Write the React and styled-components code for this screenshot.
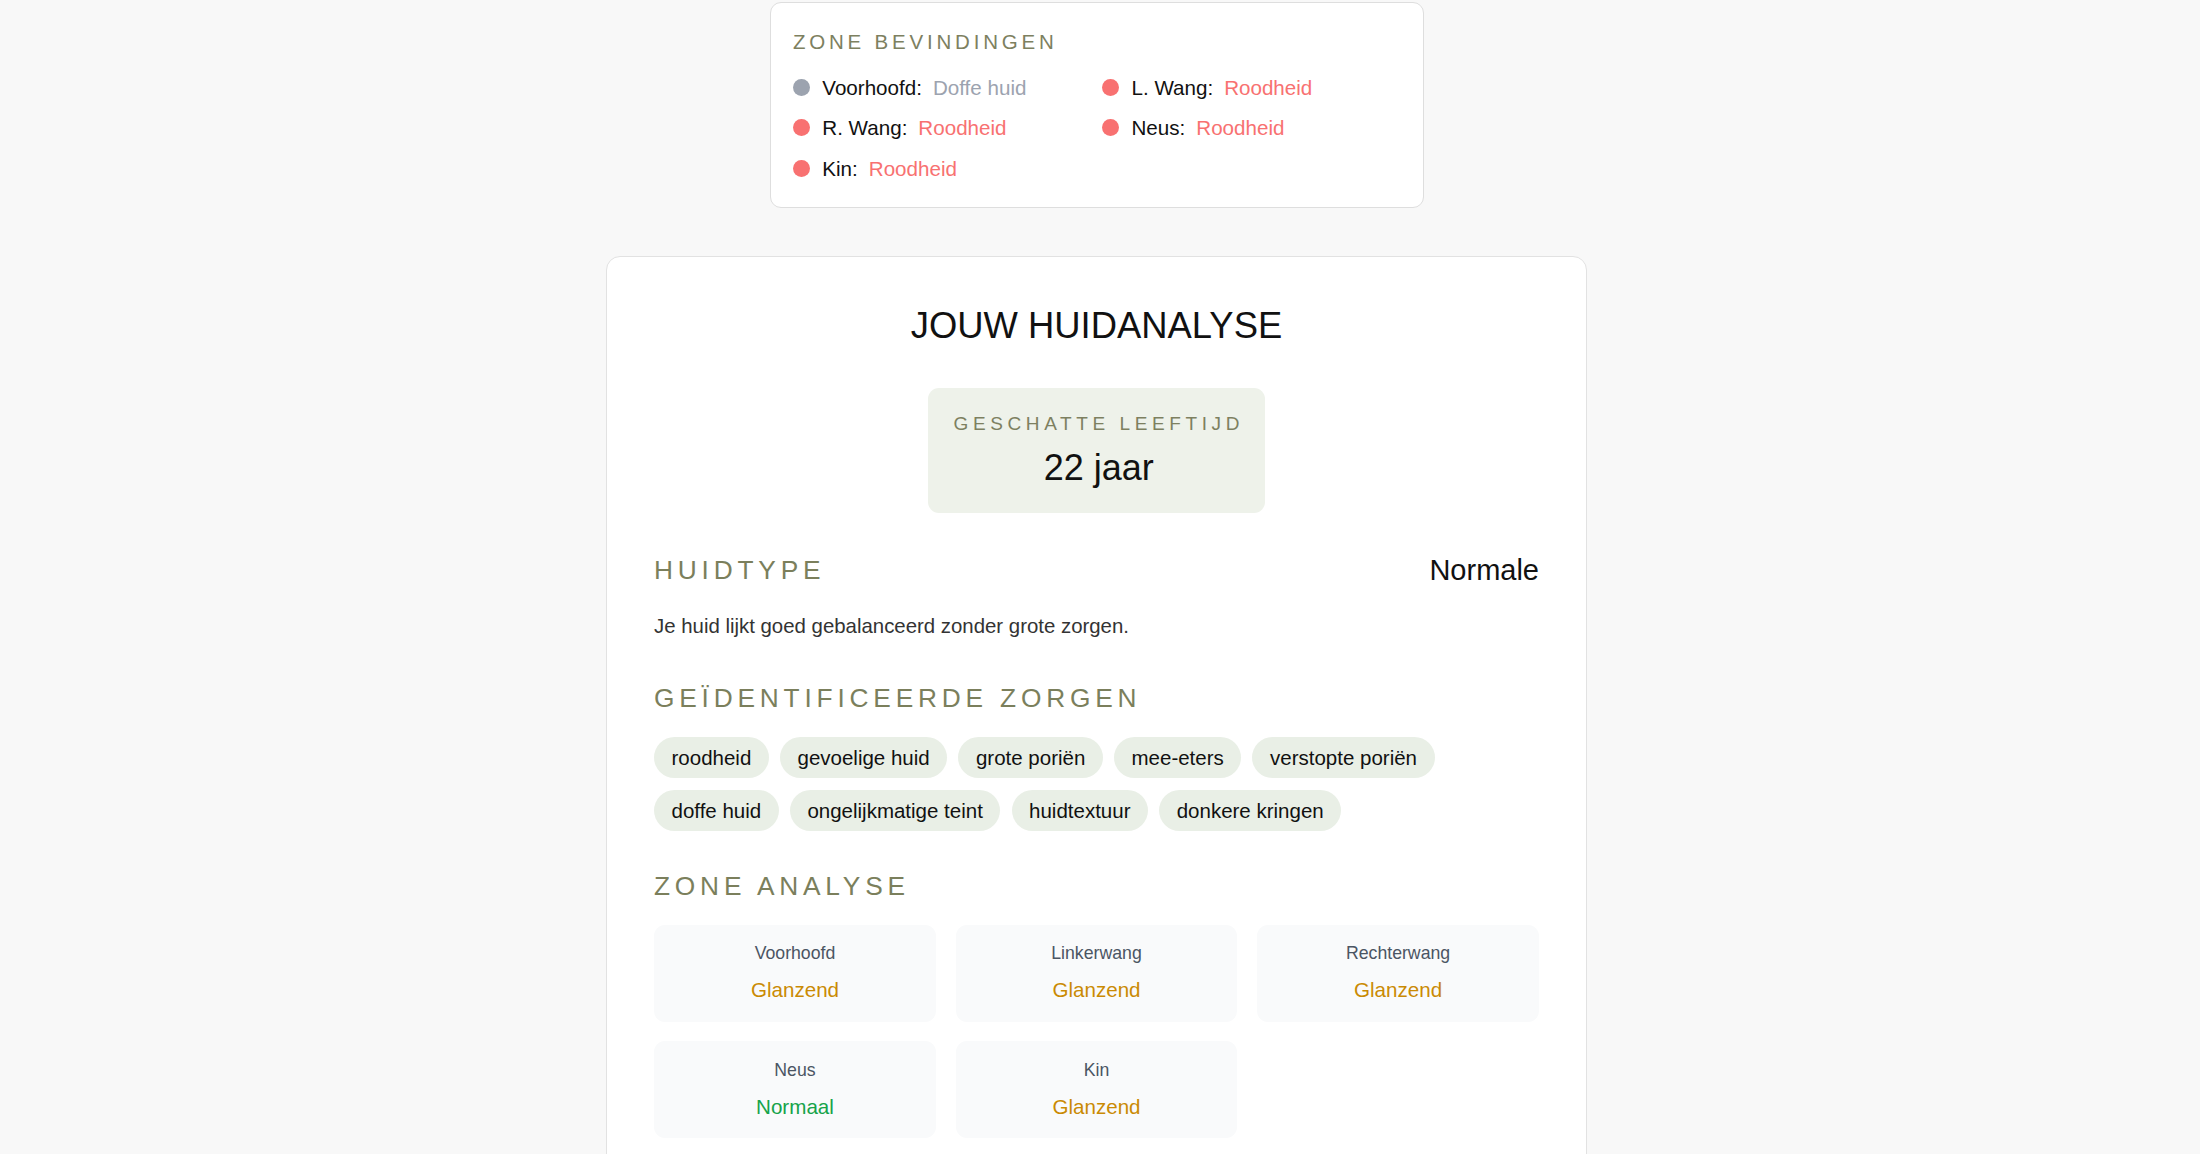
import React from "react";
import styled, { createGlobalStyle } from "styled-components";

const GlobalStyle = createGlobalStyle`
  html, body {
    margin: 0;
    padding: 0;
    background: #f8f8f8;
    font-family: "Liberation Sans", Arial, Helvetica, sans-serif;
    color: #111;
  }
  * { box-sizing: border-box; }
`;

const Page = styled.div`
  display: flex;
  flex-direction: column;
  align-items: center;
  padding: 2px 7px 60px 0;
  gap: 48px;
`;

const FindingsCard = styled.section`
  width: 654px;
  background: #fff;
  border: 1px solid #dedede;
  border-radius: 11px;
  padding: 24.5px 22.4px 24px;
`;

const SmallHeading = styled.h3`
  margin: 0 0 17px;
  font-size: 20.5px;
  line-height: 28px;
  font-weight: 400;
  letter-spacing: 3.8px;
  color: #7d8060;
  text-transform: uppercase;
`;

const FindingsGrid = styled.div`
  display: grid;
  grid-template-columns: 1fr 1fr;
  gap: 11.2px;
`;

const Finding = styled.div`
  display: flex;
  align-items: center;
  font-size: 20.6px;
  line-height: 29.4px;
`;

const Dot = styled.span`
  width: 16.8px;
  height: 16.8px;
  border-radius: 50%;
  background: ${(p) => p.$color};
  margin-right: 12.6px;
  flex-shrink: 0;
`;

const FindingLabel = styled.span`
  color: #111;
  margin-right: 11px;
`;

const FindingValue = styled.span`
  color: ${(p) => p.$color};
`;

const MainCard = styled.section`
  width: 981px;
  background: #fff;
  border: 1px solid #e2e2e2;
  border-radius: 14px;
  padding: 46.5px 47px 60px;
`;

const Title = styled.h1`
  margin: 0 0 40px;
  text-align: center;
  font-size: 36.4px;
  line-height: 44px;
  font-weight: 400;
  color: #111;
`;

const AgeWrap = styled.div`
  display: flex;
  justify-content: center;
  margin-bottom: 39px;
`;

const AgeBox = styled.div`
  display: flex;
  flex-direction: column;
  align-items: center;
  background: #eef2ea;
  border-radius: 11px;
  padding: 22.8px 21px 22.8px 25.6px;
`;

const AgeLabel = styled.div`
  font-size: 19px;
  line-height: 28px;
  letter-spacing: 4.6px;
  color: #7d8060;
  text-transform: uppercase;
`;

const AgeValue = styled.div`
  margin-top: 7.6px;
  font-size: 36px;
  line-height: 44px;
  color: #111;
`;

const SectionHeading = styled.h2`
  margin: ${(p) => p.$top || 0}px 0 0;
  font-size: 26.3px;
  line-height: 36px;
  font-weight: 400;
  letter-spacing: 4.8px;
  color: #7b7f5c;
  text-transform: uppercase;
`;

const TypeRow = styled.div`
  display: flex;
  align-items: center;
  justify-content: space-between;
  height: 36px;
`;

const TypeValue = styled.div`
  font-size: 29px;
  line-height: 36px;
  color: #111;
`;

const Description = styled.p`
  margin: 24px 0 0;
  font-size: 20.4px;
  line-height: 28px;
  color: #333;
`;

const Tags = styled.div`
  display: flex;
  flex-wrap: wrap;
  gap: 12px 11.2px;
  margin-top: 21px;
  max-width: 820px;
`;

const Tag = styled.span`
  display: inline-block;
  background: #e9efe6;
  border-radius: 999px;
  padding: 9px 17.5px;
  font-size: 20.5px;
  line-height: 23px;
  color: #111;
`;

const ZoneGrid = styled.div`
  display: grid;
  grid-template-columns: repeat(3, 1fr);
  gap: 19.6px;
  margin-top: 21px;
`;

const ZoneCard = styled.div`
  background: #f9fafb;
  border-radius: 11px;
  padding: 16.5px 16.8px 17.5px;
  text-align: center;
`;

const ZoneLabel = styled.div`
  font-size: 17.7px;
  line-height: 24px;
  color: #4b5563;
`;

const ZoneValue = styled.div`
  margin-top: 11px;
  font-size: 20.6px;
  line-height: 28px;
  font-weight: 500;
  color: ${(p) => p.$color};
`;

const RED = "#f87171";
const GRAY = "#9ca3af";
const GOLD = "#ca8a04";
const GREEN = "#16a34a";

const findings = [
  { label: "Voorhoofd:", value: "Doffe huid", color: GRAY },
  { label: "L. Wang:", value: "Roodheid", color: RED },
  { label: "R. Wang:", value: "Roodheid", color: RED },
  { label: "Neus:", value: "Roodheid", color: RED },
  { label: "Kin:", value: "Roodheid", color: RED },
];

const concerns = [
  "roodheid",
  "gevoelige huid",
  "grote poriën",
  "mee-eters",
  "verstopte poriën",
  "doffe huid",
  "ongelijkmatige teint",
  "huidtextuur",
  "donkere kringen",
];

const zones = [
  { label: "Voorhoofd", value: "Glanzend", color: GOLD },
  { label: "Linkerwang", value: "Glanzend", color: GOLD },
  { label: "Rechterwang", value: "Glanzend", color: GOLD },
  { label: "Neus", value: "Normaal", color: GREEN },
  { label: "Kin", value: "Glanzend", color: GOLD },
];

export default function App() {
  return (
    <>
      <GlobalStyle />
      <Page>
        <FindingsCard>
          <SmallHeading>Zone bevindingen</SmallHeading>
          <FindingsGrid>
            {findings.map((f) => (
              <Finding key={f.label}>
                <Dot $color={f.color} />
                <FindingLabel>{f.label}</FindingLabel>
                <FindingValue $color={f.color}>{f.value}</FindingValue>
              </Finding>
            ))}
          </FindingsGrid>
        </FindingsCard>

        <MainCard>
          <Title>JOUW HUIDANALYSE</Title>
          <AgeWrap>
            <AgeBox>
              <AgeLabel>Geschatte leeftijd</AgeLabel>
              <AgeValue>22 jaar</AgeValue>
            </AgeBox>
          </AgeWrap>

          <TypeRow>
            <SectionHeading>Huidtype</SectionHeading>
            <TypeValue>Normale</TypeValue>
          </TypeRow>
          <Description>Je huid lijkt goed gebalanceerd zonder grote zorgen.</Description>

          <SectionHeading $top={40}>Geïdentificeerde zorgen</SectionHeading>
          <Tags>
            {concerns.map((c) => (
              <Tag key={c}>{c}</Tag>
            ))}
          </Tags>

          <SectionHeading $top={37}>Zone analyse</SectionHeading>
          <ZoneGrid>
            {zones.map((z) => (
              <ZoneCard key={z.label}>
                <ZoneLabel>{z.label}</ZoneLabel>
                <ZoneValue $color={z.color}>{z.value}</ZoneValue>
              </ZoneCard>
            ))}
          </ZoneGrid>
        </MainCard>
      </Page>
    </>
  );
}
